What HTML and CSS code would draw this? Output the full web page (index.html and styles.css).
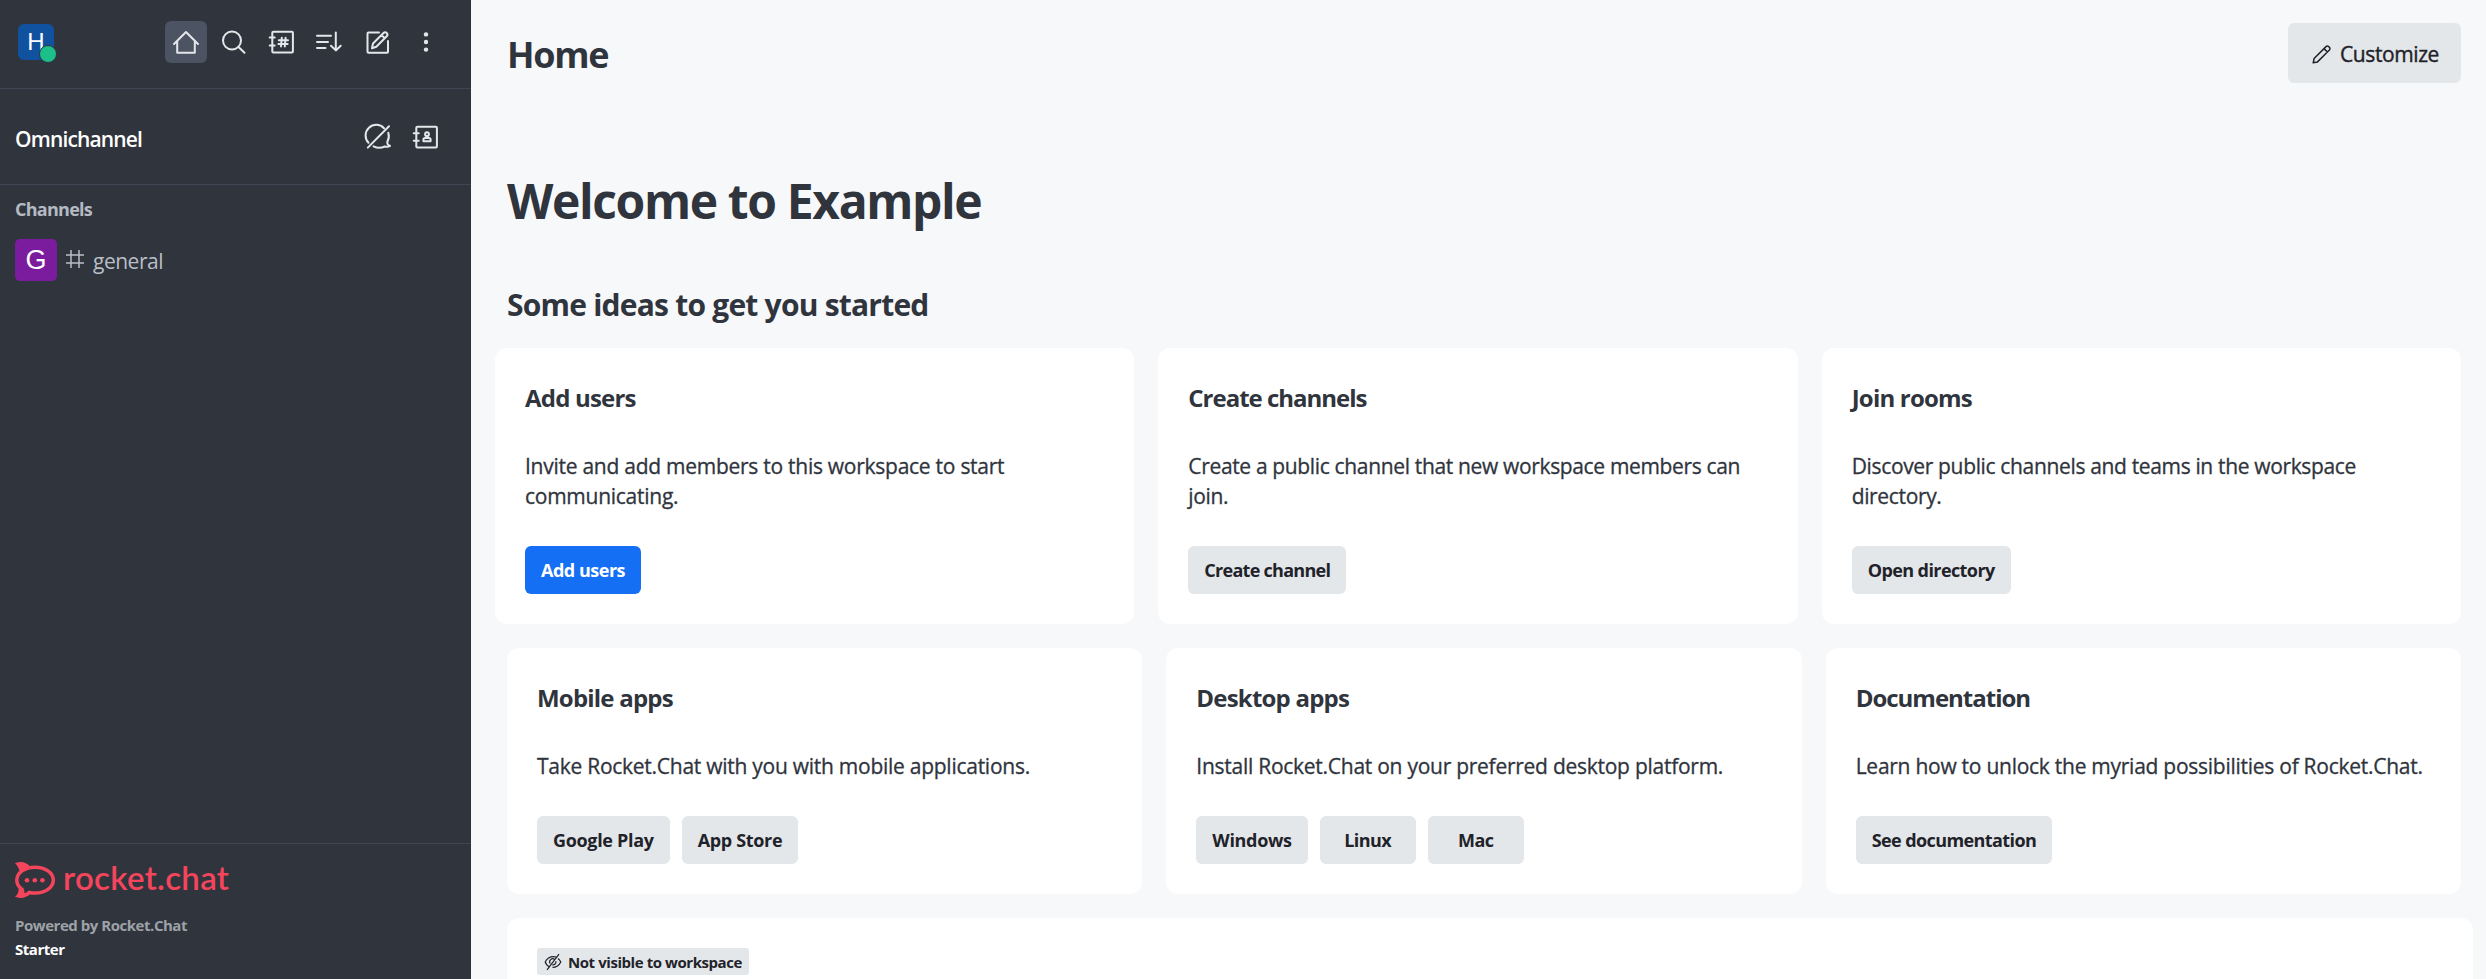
FILE: index.html
```html
<!DOCTYPE html>
<html lang="en">
<head>
<meta charset="utf-8">
<title>Home</title>
<link rel="stylesheet" href="styles.css">
</head>
<body>
<div class="app">
  <aside class="sidebar">
    <header class="topbar">
      <div class="user">H<span class="status"></span></div>
      <nav class="tools">
        <button class="tool tool-active" aria-label="Home"><svg class="icon" viewBox="0 0 30 30"><path d="M3 17 15 5l12 12M6.2 14.5v11.2h17.6V14.5"/></svg></button>
        <button class="tool" aria-label="Search"><svg class="icon" viewBox="0 0 30 30"><circle cx="13" cy="13.5" r="9"/><path d="m19.5 20 6 5.8"/></svg></button>
        <button class="tool" aria-label="Directory"><svg class="icon" viewBox="0 0 30 30"><rect x="5.3" y="4.7" width="20.6" height="20.8" rx="1"/><path d="M2.7 10.5h5M2.7 18.5h5M14.8 10.8l-.8 8.6M18.6 10.8l-.8 8.6M11.8 13.2h9.2M11.4 17h9.2"/></svg></button>
        <button class="tool" aria-label="Sort"><svg class="icon" viewBox="0 0 30 30"><path d="M2 8.8h14M2 15h11M2 21h8.5M20.8 5.5v17.8M16 18.8l4.8 4.6 4.9-4.6"/></svg></button>
        <button class="tool" aria-label="Create"><svg class="icon" viewBox="0 0 30 30"><path d="M16 5.5H5.500a1 1 0 0 0-1 1v18.300a1 1 0 0 0 1 1h18.500a1 1 0 0 0 1-1V14M9 21.300l1-4.800L20.500 6a2.200 2.200 0 0 1 3.200 3.200L13.300 19.800zM18.500 8l3.200 3.200"/></svg></button>
        <button class="tool" aria-label="More"><svg class="icon icon-solid" viewBox="0 0 30 30"><circle cx="15" cy="7.4" r="2.2"/><circle cx="15" cy="15" r="2.2"/><circle cx="15" cy="22.6" r="2.2"/></svg></button>
      </nav>
    </header>
    <section class="omni">
      <h3 class="omni-title">Omnichannel</h3>
      <div class="tools">
        <button class="tool" aria-label="Unavailable"><svg class="icon" viewBox="0 0 30 30"><path d="M5.5 20.8A10.4 10.4 0 0 1 21 6.2M25.3 10.8c1 3.2.5 6.4-1 9.2-.3 2 .6 3 2.7 4-1.5 1-3.5 1-5.2.5-3.5 1.7-8 1.6-11.3-.2M4.8 25.6 26 4.2"/></svg></button>
        <button class="tool" aria-label="Contact center"><svg class="icon" viewBox="0 0 30 30"><rect x="5.3" y="4.7" width="20.6" height="20.8" rx="1"/><path d="M2.7 11.2h5M2.7 18.8h5"/><circle cx="16" cy="12.2" r="1.9"/><path d="M12.4 19.2v-1.4q0-1.8 1.8-1.8h3.6q1.8 0 1.8 1.8v1.4z"/></svg></button>
      </div>
    </section>
    <section class="rooms">
      <h4 class="rooms-title">Channels</h4>
      <a class="room">
        <span class="room-avatar">G</span>
        <svg class="room-icon" viewBox="0 0 20 20"><path d="M6 1v18M14 1v18M1 6h18M1 14h18"/></svg>
        <span class="room-name">general</span>
      </a>
    </section>
    <footer class="brand">
      <div class="logo">
        <svg class="logo-mark" viewBox="0 0 40 36"><path class="logo-fin" d="M0 1.2C6-1.2 11.5.2 15 4.6L4.8 10.5C4.3 6.5 2.5 3.5 0 1.2z"/><path class="logo-fin" d="M0 34.8c2.8-2.2 4-5.2 3.6-9.3l11.2 5.7C11 36 5.5 37 0 34.8z"/><path class="logo-bubble" d="M20 5.2c10.2 0 18.3 5.6 18.3 13S30.2 31.1 20 31.1c-2 0-3.9-.2-5.7-.6-2.3 2.3-4.5 3.2-7.5 3.2 1.3-2.5 1.2-4.5.2-6.5-3.3-2.3-5.2-5.4-5.2-9 0-7.4 8-13 18.2-13z"/><circle cx="12" cy="18.3" r="2.3"/><circle cx="19.8" cy="18.3" r="2.3"/><circle cx="27.4" cy="18.3" r="2.3"/></svg>
        <span class="logo-text">rocket.chat</span>
      </div>
      <p class="powered">Powered by Rocket.Chat</p>
      <p class="plan">Starter</p>
    </footer>
  </aside>
  <main class="page">
    <header class="page-head">
      <h1 class="page-title">Home</h1>
      <button class="btn btn-large"><svg class="pen" viewBox="0 0 20 20"><path d="M1.2 18.8l.9-4.3L14 2.6a1.8 1.8 0 0 1 2.6 0l.8.8a1.8 1.8 0 0 1 0 2.6L5.5 17.9zM12 4.6 15.4 8"/></svg>Customize</button>
    </header>
    <h2 class="welcome">Welcome to Example</h2>
    <h3 class="ideas">Some ideas to get you started</h3>
    <div class="grid grid-wide">
      <article class="card">
        <h4 class="card-title">Add users</h4>
        <p class="card-text">Invite and add members to this workspace to start<br>communicating.</p>
        <div class="actions"><button class="btn btn-primary">Add users</button></div>
      </article>
      <article class="card">
        <h4 class="card-title tight">Create channels</h4>
        <p class="card-text snug">Create a public channel that new workspace members can<br>join.</p>
        <div class="actions"><button class="btn tight">Create channel</button></div>
      </article>
      <article class="card">
        <h4 class="card-title">Join rooms</h4>
        <p class="card-text snug">Discover public channels and teams in the workspace<br>directory.</p>
        <div class="actions"><button class="btn">Open directory</button></div>
      </article>
    </div>
    <div class="grid">
      <article class="card">
        <h4 class="card-title">Mobile apps</h4>
        <p class="card-text">Take Rocket.Chat with you with mobile applications.</p>
        <div class="actions"><button class="btn loose">Google Play</button><button class="btn loose">App Store</button></div>
      </article>
      <article class="card">
        <h4 class="card-title">Desktop apps</h4>
        <p class="card-text">Install Rocket.Chat on your preferred desktop platform.</p>
        <div class="actions"><button class="btn loose">Windows</button><button class="btn">Linux</button><button class="btn">Mac</button></div>
      </article>
      <article class="card">
        <h4 class="card-title tight">Documentation</h4>
        <p class="card-text">Learn how to unlock the myriad possibilities of Rocket.Chat.</p>
        <div class="actions"><button class="btn">See documentation</button></div>
      </article>
    </div>
    <article class="card card-custom">
      <span class="tag"><svg class="tag-icon" viewBox="0 0 18 18"><path d="M6 14A8 8 0 0 1 1.2 9C3 5.3 6 3.6 9.5 3.6c.9 0 1.8.1 2.6.4M14 5.5A9 9 0 0 1 16.8 9C15 12.7 12 14.4 8.5 14.4M6.2 10.5a3 3 0 0 1 4.4-4M11.9 8.2a3 3 0 0 1-3.6 3.6M3 16.8 15 1.2"/></svg>Not visible to workspace</span>
    </article>
  </main>
</div>
</body>
</html>
```
FILE: styles.css
```css
* { box-sizing: border-box; }
body {
  margin: 0;
  font-family: "Open Sans", "Noto Sans", sans-serif;
  color: #2f343d;
  background: #f7f8fa;
}
h1, h2, h3, h4, p { margin: 0; }
button { border: 0; margin: 0; font-family: inherit; color: inherit; }
.app { display: flex; height: 979px; overflow: hidden; }

.sidebar {
  width: 471px;
  flex: none;
  display: flex;
  flex-direction: column;
  background: #2f343d;
}
.topbar {
  height: 89px;
  padding: 21px 24px 0 18px;
  display: flex;
  justify-content: space-between;
  align-items: flex-start;
  border-bottom: 1px solid #404754;
}
.user {
  position: relative;
  width: 36px;
  height: 36px;
  margin-top: 3px;
  border-radius: 6px;
  background: #1051a0;
  color: #fff;
  font: 24px/35px "Liberation Sans", Arial, sans-serif;
  text-align: center;
}
.status {
  position: absolute;
  right: -3px;
  bottom: -3px;
  width: 18px;
  height: 18px;
  border: 1.5px solid #2f343d;
  border-radius: 50%;
  background: #1cbf89;
}
.tools { display: flex; gap: 6px; }
.tool {
  width: 42px;
  height: 42px;
  padding: 6px;
  border-radius: 6px;
  background: transparent;
}
.tool-active { background: #4c5362; }
.icon {
  display: block;
  width: 30px;
  height: 30px;
  fill: none;
  stroke: #e4e7ea;
  stroke-width: 2;
  stroke-linecap: round;
  stroke-linejoin: round;
}
.icon-solid { fill: #e4e7ea; stroke: none; }
.omni {
  height: 96px;
  padding: 2px 24px 0 15px;
  display: flex;
  justify-content: space-between;
  align-items: center;
  border-bottom: 1px solid #404754;
}
.omni .tools { padding-bottom: 2px; }
.omni-title {
  color: #fff;
  font-size: 21px;
  line-height: 30px;
  font-weight: 600;
  letter-spacing: -0.040em;
  padding-top: 2px;
}
.rooms-title {
  padding: 12px 15px 0;
  color: #b5bac2;
  font-size: 18px;
  line-height: 24px;
  font-weight: 700;
  letter-spacing: -0.041em;
}
.room {
  height: 60px;
  padding: 0 15px;
  margin-top: 9px;
  display: flex;
  align-items: center;
  color: #b9bec7;
}
.room-avatar {
  width: 42px;
  height: 42px;
  border-radius: 5px;
  background: #7b1b9e;
  color: #fff;
  font: 27px/42px "Liberation Sans", Arial, sans-serif;
  text-align: center;
}
.room-icon {
  width: 20px;
  height: 20px;
  margin: 0 8px 2px 8px;
  fill: none;
  stroke: #b9bec7;
  stroke-width: 1.5;
}
.room-name {
  padding-top: 2px;
  font-size: 21px;
  line-height: 30px;
  letter-spacing: -0.023em;
}
.brand {
  height: 136px;
  margin-top: auto;
  padding: 18px 15px 0;
  border-top: 1px solid #404754;
}
.logo { display: flex; height: 36px; gap: 8px; }
.logo-mark { width: 40px; height: 36px; fill: #f5455c; }
.logo-bubble { fill: #2f343d; stroke: #f5455c; stroke-width: 3.5; }
.logo-text {
  color: #f5455c;
  font: 600 33px/31px Lato, sans-serif;
  letter-spacing: 0.01em;
}
.powered, .plan {
  font-size: 15px;
  line-height: 24px;
  font-weight: 700;
  letter-spacing: -0.031em;
}
.powered { margin-top: 15px; color: #9ea2a8; }
.plan { color: #fff; }

.page {
  flex: 1;
  min-width: 0;
  padding-left: 36px;
}
.page-head {
  height: 106px;
  padding: 0 25px 0 0;
  display: flex;
  justify-content: space-between;
  align-items: center;
}
.page-title {
  font-size: 36px;
  line-height: 48px;
  font-weight: 700;
  letter-spacing: -0.036em;
  padding-top: 4px;
}
.welcome {
  margin-top: 63px;
  font-size: 48px;
  line-height: 64px;
  font-weight: 700;
  letter-spacing: -0.0285em;
}
.ideas {
  margin-top: 52px;
  font-size: 30px;
  line-height: 40px;
  font-weight: 700;
  letter-spacing: -0.026em;
}
.grid {
  display: grid;
  grid-template-columns: repeat(3, minmax(0, 1fr));
  gap: 24px;
  margin: 24px 25px 0 0;
}
.grid-wide { margin: 23px 25px 0 -12px; }
.card {
  padding: 30px;
  border-radius: 12px;
  background: #fff;
}
.card-title {
  padding-top: 2px;
  font-size: 24px;
  line-height: 36px;
  font-weight: 700;
  letter-spacing: -0.033em;
}
.card-text {
  margin-top: 35px;
  font-size: 21px;
  line-height: 30px;
  letter-spacing: -0.0125em;
  white-space: nowrap;
  -webkit-text-stroke: 0.3px currentColor;
}
.card-title.tight { letter-spacing: -0.042em; }
.card-text.snug { letter-spacing: -0.0165em; }
.actions { display: flex; gap: 12px; margin-top: 35px; }
.btn {
  min-width: 96px;
  height: 48px;
  padding: 0 16px;
  border-radius: 6px;
  background: #e4e7ea;
  color: #1f2329;
  font-size: 18px;
  font-weight: 700;
  letter-spacing: -0.0325em;
}
.btn.tight { letter-spacing: -0.040em; }
.btn.loose { letter-spacing: -0.018em; }
.btn-primary {
  background: #156ff5;
  color: #fff;
  letter-spacing: -0.027em;
}
.btn-large {
  width: 173px;
  height: 60px;
  padding: 2px 0 0 2px;
  display: flex;
  justify-content: center;
  align-items: center;
  gap: 8px;
  font-size: 21px;
  font-weight: 400;
  letter-spacing: -0.019em;
  -webkit-text-stroke: 0.4px currentColor;
}
.pen {
  width: 20px;
  height: 20px;
  fill: none;
  stroke: #1f2329;
  stroke-width: 1.5;
  stroke-linejoin: round;
}
.card-custom { width: 1966px; height: 300px; margin-top: 24px; }
.tag {
  width: 212px;
  height: 27px;
  padding-left: 7px;
  display: flex;
  align-items: center;
  gap: 6px;
  border-radius: 3px;
  background: #e4e7ea;
  color: #1f2329;
  font-size: 15px;
  font-weight: 700;
  letter-spacing: -0.029em;
  white-space: nowrap;
}
.tag-icon {
  width: 18px;
  height: 18px;
  fill: none;
  stroke: #1f2329;
  stroke-width: 1.2;
}
```
